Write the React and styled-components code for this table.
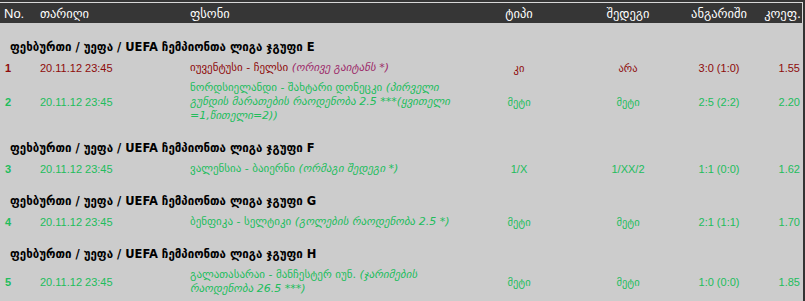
import React from "react"
import styled, { createGlobalStyle } from 'styled-components'

const GlobalStyle = createGlobalStyle`
  html, body {
    margin: 0;
    padding: 0;
    background: #cccccc;
  }
  body {
    font-family: "Liberation Sans", Arial, "DejaVu Sans", sans-serif;
  }
`

const GREEN = '#21bd5c'
const RED = '#8e0a0a'
const PURPLE = '#9c2a6a'
const GEO = '"DejaVu Sans", "Liberation Sans", sans-serif'

const cols = '40px 150px 278px 102px 116px 66px 51px'

const Page = styled.div`
  width: 803px;
  height: 301px;
  overflow: hidden;
  border-right: 2px solid #333;
  background: #cccccc;
`

const HeadWrap = styled.div`
  background: #363636;
  padding-top: 2px;
`

const HeadRow = styled.div`
  display: grid;
  grid-template-columns: ${cols};
  height: 20px;
  align-items: center;
  border-top: 1px solid #d8d8d8;
  border-right: 1px solid #d8d8d8;
  color: #ffffff;
`

const HeadCell = styled.div`
  text-align: ${p => p.$align || 'left'};
  padding-left: ${p => p.$pl || 0}px;
  padding-right: ${p => p.$pr || 0}px;
  font-family: ${p => p.$latin ? '"Liberation Sans", sans-serif' : GEO};
  font-size: ${p => p.$fs || 12.5}px;
`

const Body = styled.div`
  padding-top: 2px;
`

const GroupTitle = styled.div`
  padding: 15px 0 3px 10px;
  font-family: ${GEO};
  font-weight: bold;
  font-size: 11.5px;
  line-height: 15px;
  color: #000;
`

const Row = styled.div`
  display: grid;
  grid-template-columns: ${cols};
  align-items: center;
  padding: 3px 0;
  font-size: 11px;
  line-height: 14px;
  color: ${p => p.$color};
`

const Num = styled.div`
  padding-left: 5px;
  font-weight: bold;
`

const Cell = styled.div`
  text-align: ${p => p.$align || 'left'};
  padding-right: ${p => p.$pr || 0}px;
  font-family: ${p => p.$geo ? GEO : 'inherit'};
  font-size: ${p => p.$geo ? '10.5px' : 'inherit'};
`

const EventCell = styled.div`
  max-width: 261px;
  font-family: ${GEO};
  font-size: 11px;
`

const Note = styled.span`
  font-style: italic;
  color: ${p => p.$color};
`

const groups = [
  {
    title: 'ფეხბურთი / უეფა / UEFA ჩემპიონთა ლიგა ჯგუფი E',
    rows: [
      { no: 1, date: '20.11.12 23:45', event: 'იუვენტუსი - ჩელსი', note: '(ორივე გაიტანს *)', type: 'კი', result: 'არა', score: '3:0 (1:0)', odds: '1.55', color: RED, noteColor: PURPLE },
      { no: 2, date: '20.11.12 23:45', event: 'ნორდსიელანდი - შახტარი დონეცკი', note: '(პირველი გუნდის მარათების რაოდენობა 2.5 ***(ყვითელი =1,წითელი=2))', type: 'მეტი', result: 'მეტი', score: '2:5 (2:2)', odds: '2.20', color: GREEN },
    ],
  },
  {
    title: 'ფეხბურთი / უეფა / UEFA ჩემპიონთა ლიგა ჯგუფი F',
    rows: [
      { no: 3, date: '20.11.12 23:45', event: 'ვალენსია - ბაიერნი', note: '(ორმაგი შედეგი *)', type: '1/X', result: '1/XX/2', score: '1:1 (0:0)', odds: '1.62', color: GREEN },
    ],
  },
  {
    title: 'ფეხბურთი / უეფა / UEFA ჩემპიონთა ლიგა ჯგუფი G',
    rows: [
      { no: 4, date: '20.11.12 23:45', event: 'ბენფიკა - სელტიკი', note: '(გოლების რაოდენობა 2.5 *)', type: 'მეტი', result: 'მეტი', score: '2:1 (1:1)', odds: '1.70', color: GREEN },
    ],
  },
  {
    title: 'ფეხბურთი / უეფა / UEFA ჩემპიონთა ლიგა ჯგუფი H',
    rows: [
      { no: 5, date: '20.11.12 23:45', event: 'გალათასარაი - მანჩესტერ იუნ.', note: '(ჯარიმების რაოდენობა 26.5 ***)', type: 'მეტი', result: 'მეტი', score: '1:0 (0:0)', odds: '1.85', color: GREEN },
    ],
  },
]

const App = () => {
  return (
    <Page>
      <GlobalStyle />
      <HeadWrap>
        <HeadRow>
          <HeadCell $pl={4} $fs={13} $latin>No.</HeadCell>
          <HeadCell>თარიღი</HeadCell>
          <HeadCell>ფსონი</HeadCell>
          <HeadCell $align="center">ტიპი</HeadCell>
          <HeadCell $align="center">შედეგი</HeadCell>
          <HeadCell $align="center">ანგარიში</HeadCell>
          <HeadCell $align="right" $pr={2}>კოეფ.</HeadCell>
        </HeadRow>
      </HeadWrap>
      <Body>
        {groups.map(g => (
          <div key={g.title}>
            <GroupTitle>{g.title}</GroupTitle>
            {g.rows.map(r => (
              <Row key={r.no} $color={r.color}>
                <Num>{r.no}</Num>
                <Cell>{r.date}</Cell>
                <EventCell>
                  {r.event} <Note $color={r.noteColor || r.color}>{r.note}</Note>
                </EventCell>
                <Cell $align="center" $geo={r.type !== '1/X'}>{r.type}</Cell>
                <Cell $align="center" $geo={r.result !== '1/XX/2'}>{r.result}</Cell>
                <Cell $align="center">{r.score}</Cell>
                <Cell $align="right" $pr={3}>{r.odds}</Cell>
              </Row>
            ))}
          </div>
        ))}
      </Body>
    </Page>
  )
}

export default App
